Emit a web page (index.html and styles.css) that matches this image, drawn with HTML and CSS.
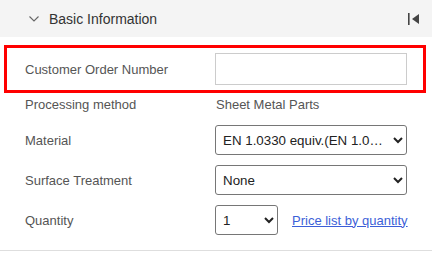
FILE: index.html
```html
<!DOCTYPE html>
<html>
<head>
<meta charset="utf-8">
<link rel="stylesheet" href="styles.css">
</head>
<body>
<div class="panel">
  <div class="header">
    <div class="title">
      <svg class="chev" width="10" height="6" viewBox="0 0 10 6"><path d="M0.5 0.5 L5 5 L9.5 0.5" fill="none" stroke="#666" stroke-width="1.1"/></svg>
      <span>Basic Information</span>
    </div>
    <svg class="collapse" width="12" height="13" viewBox="0 0 12 13"><rect x="0" y="0" width="1.6" height="12" fill="#444"/><path d="M4 6 L11 1 L11 11 Z" fill="#444"/></svg>
  </div>
  <div class="form">
    <div class="row highlight">
      <label class="label">Customer Order Number</label>
      <input class="text-input" type="text">
    </div>
    <div class="row plain">
      <span class="label">Processing method</span>
      <span class="value">Sheet Metal Parts</span>
    </div>
    <div class="row ctrl">
      <span class="label">Material</span>
      <select class="sel wide"><option>EN 1.0330 equiv.(EN 1.0330 DC01)</option></select>
    </div>
    <div class="row ctrl">
      <span class="label">Surface Treatment</span>
      <select class="sel wide"><option>None</option></select>
    </div>
    <div class="row ctrl">
      <span class="label">Quantity</span>
      <select class="sel narrow"><option>1</option></select>
      <a class="link" href="#">Price list by quantity</a>
    </div>
  </div>
</div>
</body>
</html>
```
FILE: styles.css
```css
* { box-sizing: border-box; }
html, body { margin: 0; padding: 0; background: #fff; }
body { font-family: "Liberation Sans", Arial, sans-serif; }
.panel { width: 432px; border-bottom: 1px solid #dedede; padding-bottom: 15px; }
.header {
  height: 37px;
  background: #f4f4f4;
  display: flex;
  align-items: center;
  justify-content: space-between;
  padding: 0 12px 0 29px;
}
.title { display: flex; align-items: center; gap: 10px; color: #333; font-size: 14px; }
.chev { display: block; margin-top: 1px; }
.collapse { display: block; margin-top: 1px; }
.form { padding-top: 8px; }
.row { display: flex; align-items: center; padding-left: 25px; }
.label { width: 190px; flex: none; font-size: 13px; color: #555; }
.highlight {
  height: 48px;
  margin: 0 6px 0 4px;
  border: 3px solid #ff0000;
  padding-left: 18px;
}
.text-input {
  width: 192px;
  height: 32px;
  border: 1px solid #cccccc;
  border-radius: 0;
  margin: 0;
  outline: none;
}
.plain { height: 22px; }
.value { font-size: 13px; color: #555; margin-left: 1px; }
.ctrl { margin-top: 10px; }
.sel {
  height: 30px;
  margin: 0;
  font-family: "Liberation Sans", Arial, sans-serif;
  font-size: 13.333px;
  color: #222;
  background: #fff;
  border: 1px solid #767676;
  border-radius: 3px;
  padding-left: 3px;
  padding-right: 0;
  text-overflow: ellipsis;
  white-space: nowrap;
  overflow: hidden;
}
.wide { width: 192px; }
.narrow { width: 63px; }
.link { margin-left: 14px; font-size: 13px; color: #3c5fd8; text-decoration: underline; }
```
